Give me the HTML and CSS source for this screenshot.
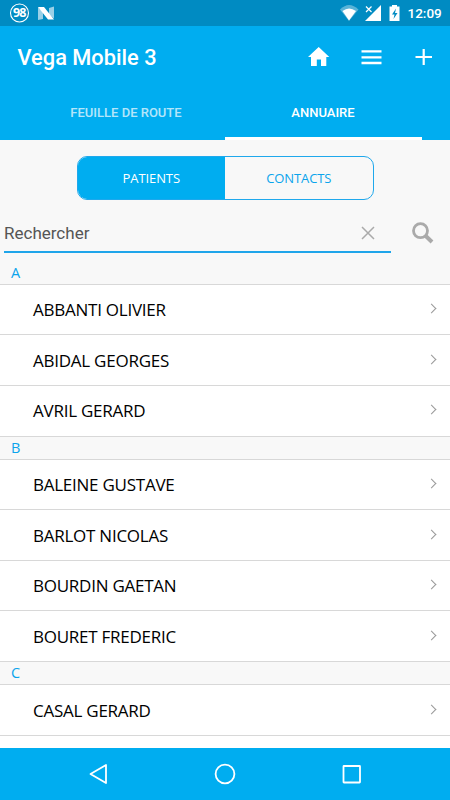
FILE: index.html
```html
<!DOCTYPE html>
<html lang="fr">
<head>
  <meta charset="UTF-8">
  <title>Vega Mobile 3</title>
  <link rel="stylesheet" href="styles.css">
</head>
<body>
  <div class="statusbar">
    <svg class="notifs" width="60" height="26" viewBox="0 0 60 26">
      <circle cx="19.500" cy="13" r="9" fill="none" stroke="#fff" stroke-width="1.100"/>
      <text class="badge" x="19.200" y="17.400" text-anchor="middle">98</text>
      <path d="M38 7l5 5v7l-5 1zM54 6.500v12l-5-4V8z" fill="#fff" opacity=".6"/>
      <path d="M38 7h6l10 12.500h-6z" fill="#fff"/>
    </svg>
    <svg class="system" width="66" height="26" viewBox="0 0 66 26">
      <path d="M0 8.500Q9-.500 18.500 8.500L9 20z" transform="translate(0 1)" fill="#fff" opacity=".35"/>
      <path d="M2.500 11Q9 6 16 11L9 20.500z" fill="#fff"/>
      <path d="M41 5v16H25z" fill="#fff"/>
      <path d="M26 6.500l5.500 5.500M31.500 6.500L26 12" stroke="#008bc2" stroke-width="3"/>
      <path d="M26 6.500l5.500 5.500M31.500 6.500L26 12" stroke="#fff" stroke-width="1.200"/>
      <path d="M52 5h5v1.500h2.500V21h-10V6.500H52z" fill="#fff"/>
      <path d="M56 8.500l-4 6h2.500l-1 4.500 4-6H55z" fill="#008bc2"/>
    </svg>
    <span class="clock">12:09</span>
  </div>

  <header>
    <div class="appbar">
      <h1>Vega Mobile 3</h1>
      <svg width="24" height="24" viewBox="0 0 24 24"><path d="M9.800 21v-6.500h4.200V21h5.300v-9h3L11.700 2 1 12h3v9z" fill="#fff"/></svg>
      <svg width="24" height="24" viewBox="0 0 24 24"><path d="M1.500 6.300h20M1.500 12.300h20M1.500 18h20" stroke="#fff" stroke-width="2.300"/></svg>
      <svg width="24" height="24" viewBox="0 0 24 24"><path d="M3.500 12h16.500M11.700 4v16" stroke="#fff" stroke-width="2.200"/></svg>
    </div>
    <nav class="tabs">
      <a class="tab">FEUILLE DE ROUTE</a>
      <a class="tab active">ANNUAIRE</a>
    </nav>
  </header>

  <main>
    <div class="switch">
      <span class="choice selected">PATIENTS</span>
      <span class="choice">CONTACTS</span>
    </div>

    <div class="search">
      <div class="field">
        <span>Rechercher</span>
        <svg width="14" height="14" viewBox="0 0 14 14"><path d="M1 1l12 12M13 1L1 13" stroke="#aaa" stroke-width="1.500"/></svg>
      </div>
      <svg class="loupe" width="22" height="22" viewBox="0 0 22 22">
        <circle cx="8.500" cy="8.700" r="7" fill="none" stroke="#aaa" stroke-width="2.800"/>
        <path d="M13 13.200l7 6.800" stroke="#aaa" stroke-width="4"/>
      </svg>
    </div>

    <div class="list">
      <h2>A</h2>
      <div class="row"><span>ABBANTI OLIVIER</span><i class="chevron"></i></div>
      <div class="row"><span>ABIDAL GEORGES</span><i class="chevron"></i></div>
      <div class="row"><span>AVRIL GERARD</span><i class="chevron"></i></div>
      <h2>B</h2>
      <div class="row"><span>BALEINE GUSTAVE</span><i class="chevron"></i></div>
      <div class="row"><span>BARLOT NICOLAS</span><i class="chevron"></i></div>
      <div class="row"><span>BOURDIN GAETAN</span><i class="chevron"></i></div>
      <div class="row"><span>BOURET FREDERIC</span><i class="chevron"></i></div>
      <h2>C</h2>
      <div class="row"><span>CASAL GERARD</span><i class="chevron"></i></div>
      <div class="row"></div>
    </div>
  </main>

  <footer>
    <svg width="24" height="24" viewBox="0 0 24 24"><path d="M20 3v18L4.500 12z" fill="none" stroke="#fff" stroke-width="1.800" stroke-linejoin="round"/></svg>
    <svg width="24" height="24" viewBox="0 0 24 24"><circle cx="12" cy="12" r="9.400" fill="none" stroke="#fff" stroke-width="1.800"/></svg>
    <svg width="24" height="24" viewBox="0 0 24 24"><rect x="3.500" y="4" width="16.500" height="16.500" rx=".5" fill="none" stroke="#fff" stroke-width="1.800"/></svg>
  </footer>
</body>
</html>
```
FILE: styles.css
```css
* {
  box-sizing: border-box;
}

body {
  margin: 0;
  height: 800px;
  overflow: hidden;
  display: flex;
  flex-direction: column;
  font-family: "Open Sans", sans-serif;
  background: #f8f8f8;
}

svg {
  display: block;
  flex: none;
}

.statusbar {
  height: 26px;
  flex: none;
  display: flex;
  align-items: center;
  background: #008bc2;
  color: #fff;
}

.badge {
  font: bold 12.5px "Open Sans", sans-serif;
  letter-spacing: -1px;
  fill: #fff;
}

.system {
  margin-left: 280px;
}

.clock {
  margin-left: 1.5px;
  font: 500 13.5px Roboto, sans-serif;
}

header {
  height: 114px;
  flex: none;
  background: #00adf0;
  color: #fff;
  font-family: Roboto, sans-serif;
}

.appbar {
  height: 62px;
  display: flex;
  align-items: center;
  gap: 28.5px;
  padding: 0 14px 0 17.5px;
}

.appbar h1 {
  margin: 0 auto 0 0;
  padding-top: 1px;
  font-size: 21.8px;
  font-weight: 500;
}

.tabs {
  height: 52px;
  display: flex;
  padding: 0 28px 0 27.5px;
}

.tab {
  width: 197px;
  padding-bottom: 1px;
  display: flex;
  align-items: center;
  justify-content: center;
  font-size: 13px;
  font-weight: 500;
  opacity: .7;
  border-bottom: 3px solid transparent;
}

.tab.active {
  opacity: 1;
  border-color: #fff;
}

main {
  height: 607.5px;
  flex: none;
  overflow: hidden;
  padding-top: 16px;
}

.switch {
  width: 297px;
  height: 44px;
  margin: 0 auto;
  display: flex;
  border: 1px solid #1fa8ec;
  border-radius: 10px;
  overflow: hidden;
  font-size: 13px;
  letter-spacing: -.1px;
}

.choice {
  flex: 1;
  display: flex;
  align-items: center;
  justify-content: center;
  color: #0ba4ec;
}

.choice.selected {
  background: #00adf0;
  color: #fff;
}

.search {
  height: 53px;
  display: flex;
  padding: 0 16px 0 4px;
}

.field {
  width: 387px;
  flex: none;
  height: 53px;
  padding: 15px 16px 0 0;
  display: flex;
  align-items: center;
  justify-content: space-between;
  border-bottom: 2.5px solid #1fa5ea;
  font: 17px Roboto, sans-serif;
  color: #555;
}

.loupe {
  margin: 22px 0 0 21px;
}

.list {
  padding-top: 8.6px;
}

.list h2 {
  height: 23.3px;
  margin: 0;
  padding-left: 11px;
  border-bottom: 1.5px solid #d8d8d8;
  background: #f8f8f8;
  color: #0ba4ec;
  font-size: 14.5px;
  font-weight: 400;
  line-height: 22px;
}

.row {
  height: 50.55px;
  display: flex;
  align-items: center;
  justify-content: space-between;
  padding: 0 15px 0 33px;
  border-bottom: 1.5px solid #d8d8d8;
  background: #fff;
  color: #000;
  font-size: 17px;
  letter-spacing: -.25px;
}

.chevron {
  width: 7px;
  height: 7px;
  margin-bottom: 2px;
  border: solid #999;
  border-width: 1.5px 1.5px 0 0;
  transform: rotate(45deg);
}

footer {
  flex: 1;
  display: flex;
  align-items: center;
  justify-content: center;
  gap: 103px;
  background: #00adf0;
}
```
